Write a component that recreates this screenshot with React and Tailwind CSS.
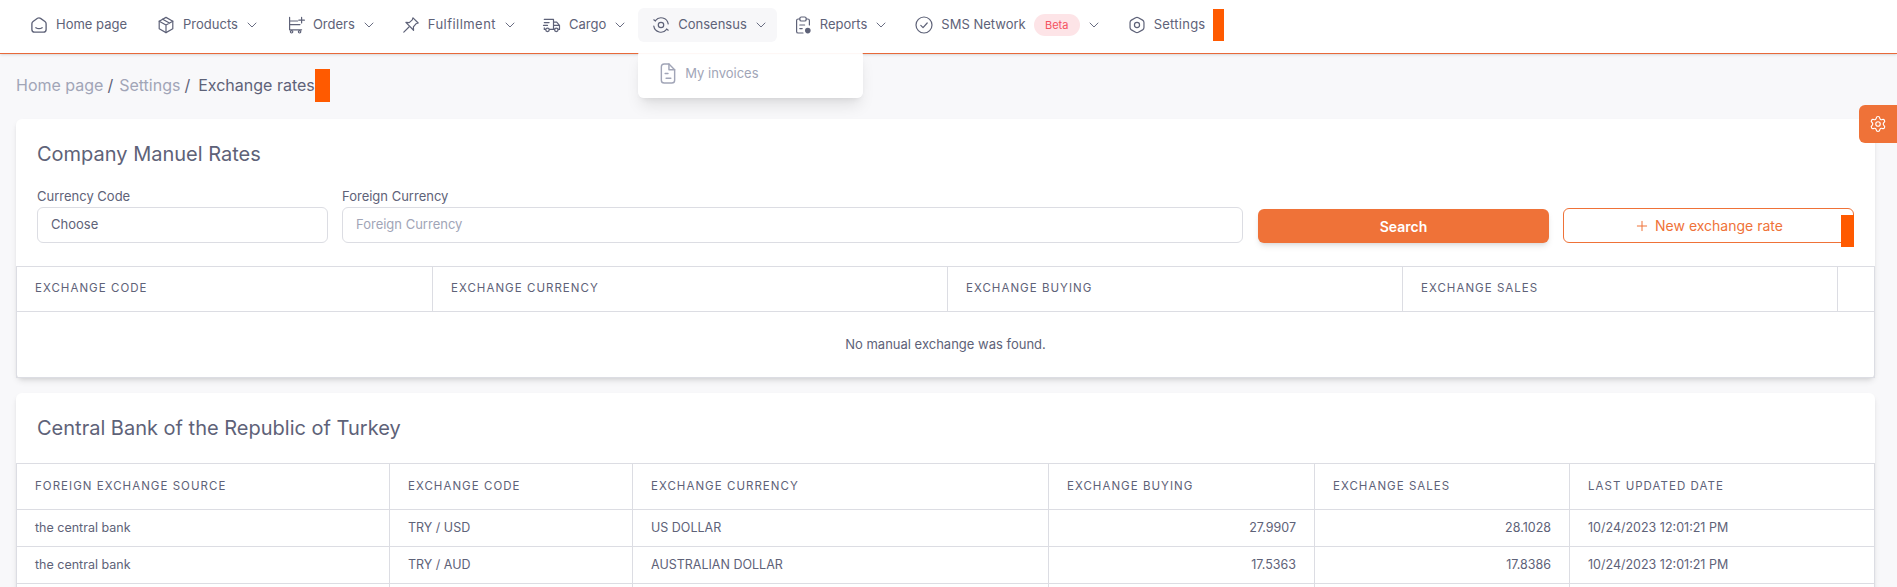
import { Plus, ChevronDown, Settings as Gear } from 'lucide-react';

const Ico = ({ children, viewBox = '2 2 20 20', className = 'w-4 h-4' }) => (
  <svg viewBox={viewBox} fill="none" stroke="currentColor" strokeWidth="1.5" strokeLinecap="round" strokeLinejoin="round" className={`shrink-0 overflow-visible ${className}`}>
    {children}
  </svg>
);

const HomeIcon = () => (
  <Ico viewBox="3 3 18 18">
    <path d="M4 10.5c0-1 .5-1.8 1.3-2.4l5-3.6a3 3 0 0 1 3.4 0l5 3.6c.8.6 1.3 1.4 1.3 2.4V17a3 3 0 0 1-3 3H7a3 3 0 0 1-3-3z" />
    <path d="M8.5 15c1.8 1.3 5.2 1.3 7 0" />
  </Ico>
);
const BoxIcon = () => (
  <Ico>
    <path d="M12 2.5l8.5 4.7v9.6L12 21.5l-8.5-4.7V7.2z" />
    <path d="M3.5 7.2 12 12l8.5-4.8M12 12v9.5M7.8 4.8l8.5 4.8" />
  </Ico>
);
const CartIcon = () => (
  <Ico>
    <path d="M4 2.5v15.5h15M4 7h10M4 11.5h13M19 2.5v7M15.5 6h7" />
    <circle cx="6.5" cy="20.5" r="1.5" />
    <circle cx="16.5" cy="20.5" r="1.5" />
  </Ico>
);
const PinIcon = () => (
  <Ico>
    <path d="M14.5 3l6.5 6.5-2.6.9-3.4 4 .2 4.2L5.6 8.8l4.2.2 3.8-3.4z" />
    <path d="M9.5 14.5 3 21" />
  </Ico>
);
const TruckIcon = () => (
  <Ico className="w-[17px] h-4">
    <path d="M3 5h11.5v12.5H9.5M3 9h6M2 12.5h5M14.5 8.5h4l3.5 4v5h-1.5M14.5 12.5H22M14.5 17.5H16" />
    <path d="M3 15.5v2h1.5" />
    <circle cx="7" cy="18" r="2.2" />
    <circle cx="18" cy="18" r="2.2" />
  </Ico>
);
const ConsensusIcon = () => (
  <Ico>
    <circle cx="12" cy="12" r="3.4" />
    <path d="M5 6.5A9 9 0 0 1 21 10.5M19 17.5A9 9 0 0 1 3 13.5" />
    <path d="M3 5.5 5 7M21 18.5 19 17" />
  </Ico>
);
const ReportIcon = () => (
  <Ico>
    <path d="M8 4.5H6A2 2 0 0 0 4 6.500v13.500a2 2 0 0 0 2 2h6M16 4.500h2a2 2 0 0 1 2 2V12" />
    <rect x="8" y="2" width="8" height="5" rx="2" />
    <path d="M8 12h6M8 16.500h3" />
    <circle cx="18" cy="19" r="3.500" fill="currentColor" stroke="none" />
  </Ico>
);
const CheckIcon = () => (
  <Ico>
    <circle cx="12" cy="12" r="10" />
    <path d="M8 12.500l2.800 2.700L16 9.500" />
  </Ico>
);
const HexIcon = () => (
  <Ico>
    <path d="M10.300 2.900a3.500 3.500 0 0 1 3.400 0l5.300 3a3.500 3.500 0 0 1 1.700 3v6.200a3.500 3.500 0 0 1-1.700 3l-5.300 3a3.500 3.500 0 0 1-3.400 0l-5.300-3a3.500 3.500 0 0 1-1.700-3V8.900a3.500 3.500 0 0 1 1.700-3z" />
    <circle cx="12" cy="12" r="3.200" />
  </Ico>
);
const DocIcon = () => (
  <Ico viewBox="5 2 14 20" className="w-[14px] h-[19px]">
    <path d="M5 5a3 3 0 0 1 3-3h5l6 6v11a3 3 0 0 1-3 3H8a3 3 0 0 1-3-3z" />
    <path d="M13 2v6h6M9 12h3M10 17h5" />
  </Ico>
);

const NavItem = ({ icon, label, chevron = true, active = false, badge, labelClass = '', className = '' }) => (
  <div className={`flex items-center h-[34px] rounded-md ${active ? 'bg-[#f7f7f9]' : ''} ${className}`}>
    {icon}
    <span className={`ml-[9px] text-[13px] whitespace-nowrap ${labelClass}`}>{label}</span>
    {badge && (
      <span className="ml-[8px] h-[22px] w-[46px] rounded-full bg-[#fde4e7] text-[#f4515f] text-[11px] flex items-center justify-center">
        {badge}
      </span>
    )}
    {chevron && <ChevronDown className="ml-[6px] w-4 h-4" strokeWidth={1.4} />}
  </div>
);

const Th = ({ children }) => (
  <th className="border border-[#dcdde3] px-[18px] text-left text-[11.5px] font-normal tracking-[0.09em]">
    {children}
  </th>
);
const Td = ({ children, className = '' }) => (
  <td className={`border border-[#dcdde3] px-[18px] text-[12.5px] ${className}`}>{children}</td>
);

const bankRows = [
  ['TRY / USD', 'US DOLLAR', '27.9907', '28.1028'],
  ['TRY / AUD', 'AUSTRALIAN DOLLAR', '17.5363', '17.8386'],
];

export default function App() {
  return (
    <div className="relative h-[587px] overflow-hidden bg-[#f8f8fa] text-[#5e6278] font-['Inter',sans-serif]">
      <header className="relative z-10 h-[54px] bg-white border-b border-[#e8693a] pl-[31px] pb-[3px] flex items-center shadow-sm">
        <NavItem icon={<HomeIcon />} label="Home page" chevron={false} className="mr-[31px]" />
        <NavItem icon={<BoxIcon />} label="Products" className="mr-[28px]" />
        <NavItem icon={<CartIcon />} label="Orders" className="mr-[26px]" />
        <NavItem icon={<PinIcon />} label="Fulfillment" labelClass="tracking-[0.45px]" className="mr-[25px]" />
        <NavItem icon={<TruckIcon />} label="Cargo" className="mr-[10px]" />
        <div className="relative mr-[18px]">
          <NavItem icon={<ConsensusIcon />} label="Consensus" active className="pl-[15px] pr-[8px]" />
          <div className="absolute left-0 top-[41px] w-[225px] h-[49px] bg-white/95 rounded-md shadow-lg flex items-center pl-[23px] text-[#a1a5b7]">
            <DocIcon />
            <span className="ml-[10px] text-[13px]">My invoices</span>
          </div>
        </div>
        <NavItem icon={<ReportIcon />} label="Reports" className="mr-[27px]" />
        <NavItem icon={<CheckIcon />} label="SMS Network" badge="Beta" className="mr-[27px]" />
        <NavItem icon={<HexIcon />} label="Settings" labelClass="tracking-[0.25px]" chevron={false} />
        <span className="ml-2 w-[11px] h-[32px] bg-[#ff5a00]" />
      </header>

      <main className="pl-4 pr-[22px]">
        <div className="h-[63px] pb-[1px] flex items-center text-[16px]">
          <span className="text-[#a1a5b7]">Home page</span>
          <span className="ml-1">/</span>
          <span className="ml-[6px] text-[#a1a5b7]">Settings</span>
          <span className="ml-1">/</span>
          <span className="ml-2">Exchange rates</span>
          <span className="w-[15px] h-[33px] bg-[#ff5a00]" />
        </div>

        <section className="mt-[2px] bg-white rounded-md shadow-md pt-5 mb-[15px]">
          <h2 className="px-[21px] text-[20px] leading-[30px]">Company Manuel Rates</h2>
          <div className="flex items-end px-[21px] mt-[17px] mb-[23px] gap-[14px] text-[13px]">
            <label className="w-[291px] shrink-0">
              <span className="block leading-[20px] mb-[1px]">Currency Code</span>
              <div className="h-[36px] border border-[#dcdde3] rounded-md flex items-center px-[13px]">Choose</div>
            </label>
            <label className="flex-1">
              <span className="block leading-[20px] mb-[1px]">Foreign Currency</span>
              <div className="h-[36px] border border-[#dcdde3] rounded-md flex items-center px-[13px] text-[#a1a5b7]">Foreign Currency</div>
            </label>
            <button className="ml-[1px] w-[291px] shrink-0 h-[34px] rounded-md bg-[#ef7238] text-white text-[14px] font-semibold shadow-md">Search</button>
            <button className="relative w-[291px] shrink-0 h-[35px] rounded-md border border-[#ef7238] text-[#ef7238] text-[14px] bg-white flex items-center justify-center gap-[5px]">
              <Plus className="w-4 h-4" strokeWidth={1.5} />
              New exchange rate
              <span className="absolute -right-px top-[6px] w-[13px] h-[32px] bg-[#ff5a00]" />
            </button>
          </div>
          <table className="w-full table-fixed border-collapse">
            <colgroup>
              <col className="w-[416px]" />
              <col className="w-[515px]" />
              <col className="w-[455px]" />
              <col className="w-[435px]" />
              <col />
            </colgroup>
            <thead>
              <tr className="h-[45px]">
                <Th>EXCHANGE CODE</Th>
                <Th>EXCHANGE CURRENCY</Th>
                <Th>EXCHANGE BUYING</Th>
                <Th>EXCHANGE SALES</Th>
                <Th />
              </tr>
            </thead>
            <tbody>
              <tr className="h-[66px]">
                <td colSpan={5} className="border border-[#dcdde3] text-center text-[13px]">No manual exchange was found.</td>
              </tr>
            </tbody>
          </table>
        </section>

        <section className="bg-white rounded-md shadow-md">
          <h2 className="px-[21px] text-[20px] leading-[70px] h-[70px]">Central Bank of the Republic of Turkey</h2>
          <table className="w-full table-fixed border-collapse">
            <colgroup>
              <col className="w-[373px]" />
              <col className="w-[243px]" />
              <col className="w-[416px]" />
              <col className="w-[266px]" />
              <col className="w-[255px]" />
              <col />
            </colgroup>
            <thead>
              <tr className="h-[46px]">
                <Th>FOREIGN EXCHANGE SOURCE</Th>
                <Th>EXCHANGE CODE</Th>
                <Th>EXCHANGE CURRENCY</Th>
                <Th>EXCHANGE BUYING</Th>
                <Th>EXCHANGE SALES</Th>
                <Th>LAST UPDATED DATE</Th>
              </tr>
            </thead>
            <tbody>
              {bankRows.map((row) => (
                <tr key={row[0]} className="h-[37px]">
                  <Td>the central bank</Td>
                  <Td>{row[0]}</Td>
                  <Td>{row[1]}</Td>
                  <Td className="text-right">{row[2]}</Td>
                  <Td className="text-right">{row[3]}</Td>
                  <Td>10/24/2023 12:01:21 PM</Td>
                </tr>
              ))}
              {/* next row starts right at the fold, only its lines show */}
              <tr className="h-[37px]">
                <Td /><Td /><Td /><Td /><Td /><Td />
              </tr>
            </tbody>
          </table>
        </section>
      </main>

      <div className="absolute right-0 top-[105px] w-[38px] h-[38px] bg-[#ef7238] rounded-l-md flex items-center justify-center text-white">
        <Gear className="w-[18px] h-[18px]" strokeWidth={1.5} />
      </div>
    </div>
  );
}
